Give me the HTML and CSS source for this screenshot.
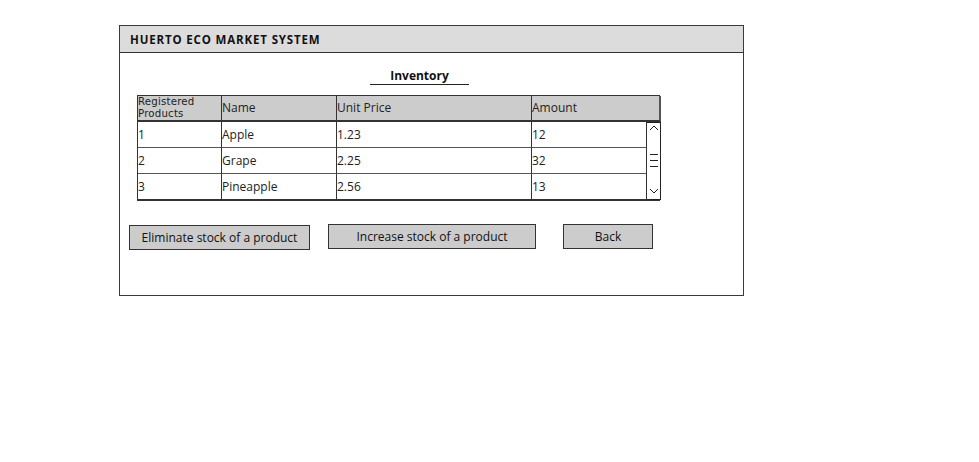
FILE: index.html
```html
<!DOCTYPE html>
<html>
<head>
<meta charset="utf-8">
<link rel="stylesheet" href="styles.css">
</head>
<body>
<div class="window">
  <div class="titlebar">HUERTO ECO MARKET SYSTEM</div>
  <div class="content">
    <div class="heading">Inventory</div>
    <div class="grid">
      <div class="th first two">Registered<br>Products</div>
      <div class="th">Name</div>
      <div class="th">Unit Price</div>
      <div class="th last">Amount</div>

      <div class="td first">1</div>
      <div class="td">Apple</div>
      <div class="td">1.23</div>
      <div class="td">12</div>
      <div class="scroll">
        <svg width="12" height="76" viewBox="0 0 12 76">
          <path d="M2 7 L6 3 L10 7" fill="none" stroke="#222" stroke-width="1"/>
          <path d="M2 31.5 H10 M2 37.5 H10 M2 43.5 H10" stroke="#222" stroke-width="1"/>
          <path d="M2 66 L6 70 L10 66" fill="none" stroke="#222" stroke-width="1"/>
        </svg>
      </div>

      <div class="td first">2</div>
      <div class="td">Grape</div>
      <div class="td">2.25</div>
      <div class="td">32</div>

      <div class="td first lastrow">3</div>
      <div class="td lastrow">Pineapple</div>
      <div class="td lastrow">2.56</div>
      <div class="td lastrow">13</div>
    </div>
    <div class="buttons">
      <div class="btn b1">Eliminate stock of a product</div>
      <div class="btn b2">Increase stock of a product</div>
      <div class="btn b3">Back</div>
    </div>
  </div>
</div>
</body>
</html>
```
FILE: styles.css
```css
html, body {
  margin: 0;
  padding: 0;
  background: #ffffff;
}
body {
  padding: 25px 0 0 119px;
  font-family: "Open Sans", "DejaVu Sans", sans-serif;
  font-size: 12px;
  color: #222;
}
.window {
  width: 623px;
  height: 269px;
  border: 1px solid #3a3a3a;
  box-sizing: content-box;
}
.titlebar {
  height: 26px;
  background: #dcdcdc;
  border-bottom: 1px solid #333;
  padding-left: 10px;
  display: flex;
  align-items: center;
  font-weight: bold;
  font-size: 11.5px;
  letter-spacing: 0.85px;
  color: #111;
}
.content {
  display: flex;
  flex-direction: column;
}
.heading {
  margin: 15px 0 0 250px;
  width: 99px;
  height: 16px;
  border-bottom: 1px solid #222;
  text-align: center;
  font-weight: bold;
  font-size: 12px;
  line-height: 16px;
  color: #111;
}
.grid {
  margin: 10px 0 0 17px;
  display: grid;
  grid-template-columns: 84px 115px 195px 115px 14px;
  grid-template-rows: 26px 26px 26px 26px;
  width: 523px;
  border: 1px solid #333;
  border-right: none;
  box-sizing: border-box;
}
.th {
  background: #cccccc;
  border-right: 1px solid #333;
  border-bottom: 2px solid #333;
  display: flex;
  align-items: center;
  line-height: 12px;
  font-size: 12px;
}
.th.two {
  font-family: "DejaVu Sans", sans-serif;
  font-size: 10.2px;
  line-height: 12px;
  letter-spacing: 0.2px;
}
.th.last {
  grid-column: span 2;
  border-right: 2px solid #555;
}
.td {
  border-right: 1px solid #333;
  border-bottom: 1px solid #555;
  display: flex;
  align-items: center;
  font-size: 12px;
  padding-bottom: 1px;
}
.td.lastrow {
  border-bottom: 1px solid #333;
}
.scroll {
  grid-column: 5;
  grid-row: 2 / span 3;
  border: 1px solid #222;
  border-left: none;
  display: flex;
  align-items: flex-start;
  justify-content: center;
  background: #fff;
}
.scroll svg {
  display: block;
}
.buttons {
  display: flex;
  align-items: flex-start;
  margin: 23px 0 0 9px;
}
.btn {
  height: 25px;
  background: #cccccc;
  border: 1px solid #333;
  box-sizing: border-box;
  display: flex;
  align-items: center;
  justify-content: center;
  font-size: 12px;
  color: #111;
}
.b1 {
  width: 181px;
  margin-top: 1px;
}
.b2 {
  width: 208px;
  margin-left: 18px;
}
.b3 {
  width: 90px;
  margin-left: 27px;
}
```
